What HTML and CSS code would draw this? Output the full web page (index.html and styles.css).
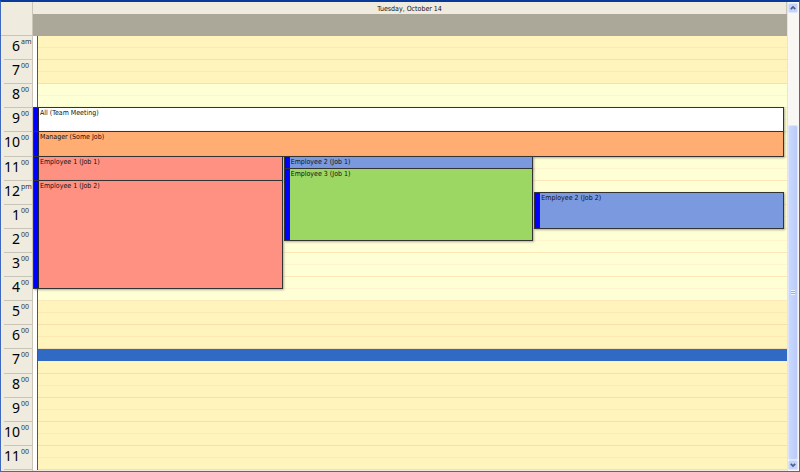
FILE: index.html
```html
<!DOCTYPE html>
<html lang="en">
<head>
<meta charset="utf-8">
<title>Day schedule</title>
<link rel="stylesheet" href="styles.css">
</head>
<body>
<main class="scheduler">
  <aside class="times">
    <div class="corner"></div>
    <ol class="hours">
      <li>6<sup>am</sup></li>
      <li>7<sup>00</sup></li>
      <li>8<sup>00</sup></li>
      <li>9<sup>00</sup></li>
      <li>10<sup>00</sup></li>
      <li>11<sup>00</sup></li>
      <li>12<sup>pm</sup></li>
      <li>1<sup>00</sup></li>
      <li>2<sup>00</sup></li>
      <li>3<sup>00</sup></li>
      <li>4<sup>00</sup></li>
      <li>5<sup>00</sup></li>
      <li>6<sup>00</sup></li>
      <li>7<sup>00</sup></li>
      <li>8<sup>00</sup></li>
      <li>9<sup>00</sup></li>
      <li>10<sup>00</sup></li>
      <li>11<sup>00</sup></li>
    </ol>
  </aside>
  <section class="day">
    <h1 class="day-title">Tuesday, October 14</h1>
    <div class="all-day"></div>
    <div class="day-body">
      <div class="slots">
        <i></i><i></i><i></i><i></i>
        <i class="work"></i><i class="work"></i><i class="work"></i><i class="work"></i><i class="work"></i><i class="work"></i>
        <i class="work"></i><i class="work"></i><i class="work"></i><i class="work"></i><i class="work"></i><i class="work"></i>
        <i class="work"></i><i class="work"></i><i class="work"></i><i class="work"></i><i class="work"></i><i class="work"></i>
        <i></i><i></i><i></i><i></i><i class="selected"></i><i></i>
        <i></i><i></i><i></i><i></i><i></i><i></i><i></i><i></i>
      </div>
      <div class="events">
        <article class="event meeting">All (Team Meeting)</article>
        <article class="event manager">Manager (Some Job)</article>
        <article class="event emp1 first">Employee 1 (Job 1)</article>
        <article class="event emp1 second">Employee 1 (Job 2)</article>
        <article class="event emp2 first">Employee 2 (Job 1)</article>
        <article class="event emp3">Employee 3 (Job 1)</article>
        <article class="event emp2 second">Employee 2 (Job 2)</article>
      </div>
    </div>
  </section>
  <div class="scrollbar">
    <button class="arrow" type="button" aria-label="Scroll up">
      <svg viewBox="0 0 9 9"><path d="M2 5.8 4.5 3.3 7 5.8"/></svg>
    </button>
    <div class="track"><div class="thumb"><span class="grip"></span></div></div>
    <button class="arrow" type="button" aria-label="Scroll down">
      <svg viewBox="0 0 9 9"><path d="M2 3.2 4.5 5.7 7 3.2"/></svg>
    </button>
  </div>
</main>
</body>
</html>
```
FILE: styles.css
```css
* {
  box-sizing: border-box;
}

body {
  margin: 0;
  font-family: "DejaVu Sans Condensed", "Noto Sans", sans-serif;
  font-size: 7px;
  line-height: 8px;
  color: #111;
}

.scheduler {
  display: grid;
  grid-template-columns: 32px 1fr 12px;
  height: 100vh;
  min-height: 400px;
  border: 1px solid #3f68bf;
  border-top: 2px solid #083a9a;
  background: #efebde;
}

/* Hour labels */
.times {
  display: flex;
  flex-direction: column;
  padding-bottom: 1px;
  border-right: 1px solid #c9c6b9;
}

.corner {
  height: 34px;
  border-bottom: 1px solid #c9c6b9;
}

.hours {
  flex: 1;
  display: grid;
  grid-template-rows: repeat(18, 1fr);
  margin: 0;
  padding: 0 1px 0 3px;
  list-style: none;
}

.hours li {
  display: grid;
  grid-template-columns: 16px 1fr;
  gap: 1px;
  min-height: 0;
  border-bottom: 1px solid #c9c6b9;
  font-family: "Noto Sans", sans-serif;
  font-size: 14px;
  line-height: 19px;
  text-align: right;
  color: #000;
}

.hours sup {
  padding-top: 2px;
  font-size: 7px;
  line-height: 8px;
  text-align: left;
  color: #333;
}

/* Day column */
.day {
  display: flex;
  flex-direction: column;
  min-width: 0;
  padding-bottom: 1px;
}

.day-title {
  height: 12px;
  margin: 0;
  border-right: 1px solid #c9c6b9;
  font-size: 7px;
  font-weight: 400;
  line-height: 14px;
  text-align: center;
}

.all-day {
  height: 22px;
  background: #aca899;
}

.day-body {
  flex: 1;
  display: grid;
  background: #fff;
}

.slots,
.events {
  grid-area: 1 / 1;
  display: grid;
  grid-template-rows: repeat(36, minmax(0, 1fr));
}

.slots {
  margin-left: 4px;
  border-left: 1px solid #555;
}

.slots i {
  border-bottom: 1px solid #fbeab4;
  background: #fff4bc;
}

.slots i:nth-child(even) {
  border-color: #f5dfae;
}

.slots .work {
  border-color: #fff4cb;
  background: #ffffd5;
}

.slots .work:nth-child(even) {
  border-color: #fde7b9;
}

.slots .selected {
  border-color: #316ac5;
  background: #316ac5;
}

.events {
  grid-template-columns: repeat(3, minmax(0, 1fr));
  column-gap: 1px;
  padding-right: 3px;
}

.event {
  position: relative;
  margin-top: -1px;
  padding: 1px 0 0 6px;
  border: 1px solid #333;
  box-shadow: 1px 1px 2px #6668;
  white-space: nowrap;
  overflow: hidden;
}

.event::before {
  content: "";
  position: absolute;
  inset: 0 auto 0 0;
  width: 4px;
  border-right: 1px solid #222;
  background: #00f;
}

.meeting {
  grid-area: 7 / 1 / 9 / 4;
  background: #fff;
}

.manager {
  grid-area: 9 / 1 / 11 / 4;
  background: #ffad72;
}

.emp1 {
  background: #ff9182;
}

.emp1.first {
  grid-area: 11 / 1 / 13 / 2;
}

.emp1.second {
  grid-area: 13 / 1 / 22 / 2;
}

.emp2 {
  background: #7b99de;
}

.emp2.first {
  grid-area: 11 / 2 / 12 / 3;
}

.emp3 {
  grid-area: 12 / 2 / 18 / 3;
  background: #9cd764;
}

.emp2.second {
  grid-area: 14 / 3 / 17 / 4;
}

/* Scrollbar */
.scrollbar {
  display: flex;
  flex-direction: column;
  padding: 1px 1px 1px 0;
  border-left: 1px solid #e8e5d8;
  background: #f8f7f4;
}

.arrow {
  display: block;
  height: 10px;
  padding: 0;
  border: 1px solid #dbe5fd;
  border-radius: 2px;
  background: #c3d3fd;
}

.arrow svg {
  display: block;
  width: 100%;
  height: 100%;
}

.arrow path {
  fill: none;
  stroke: #4d6185;
  stroke-width: 2;
}

.track {
  flex: 1;
  display: grid;
  grid-template-rows: 25fr 75fr;
}

.thumb {
  grid-row: 2;
  display: grid;
  place-items: center;
  border: 1px solid #dbe5fd;
  border-radius: 2px;
  background: linear-gradient(90deg, #cad8fe, #b9cbf8);
}

.grip {
  width: 4px;
  height: 5px;
  background: repeating-linear-gradient(#eef4fe 0 1px, #8cb0f8 1px 2px);
}
```
